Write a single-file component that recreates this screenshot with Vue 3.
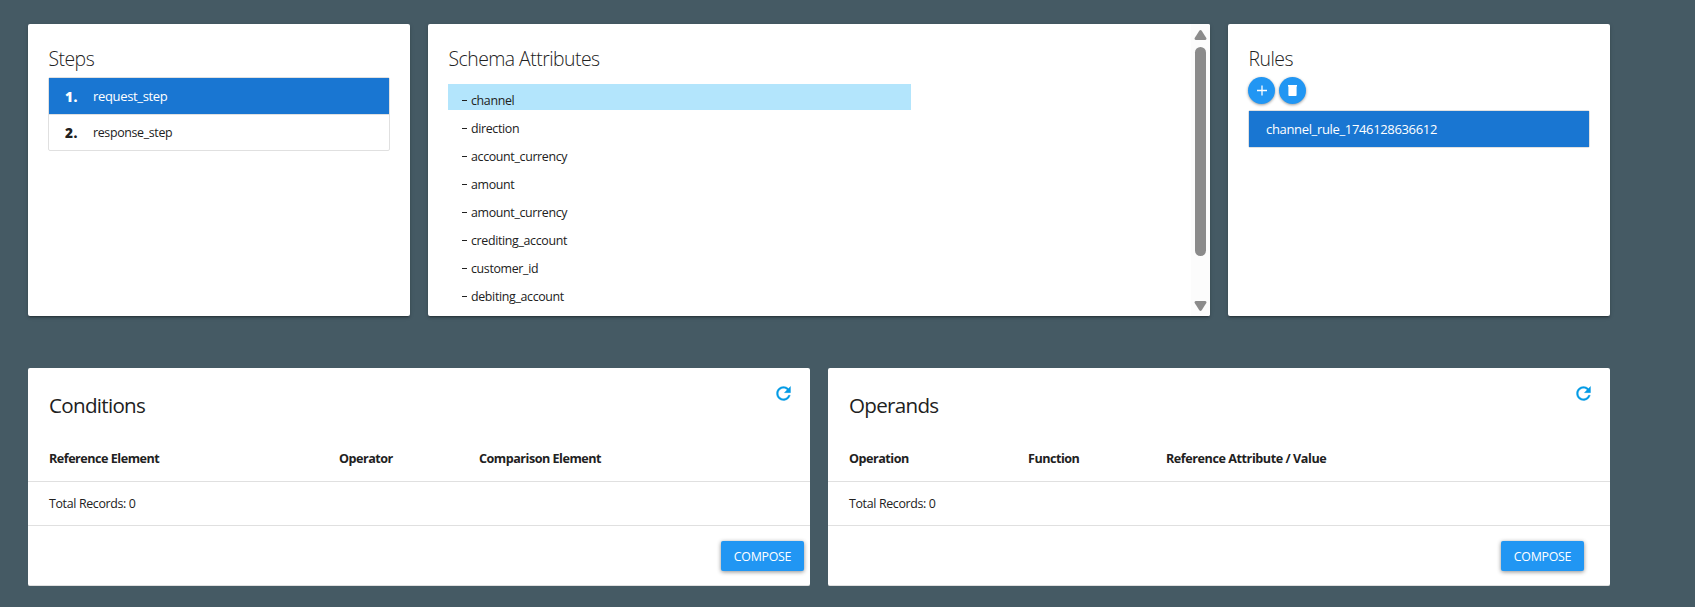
<script setup>
const steps = [
  { no: '1.', name: 'request_step', active: true },
  { no: '2.', name: 'response_step', active: false },
]
const attributes = [
  'channel',
  'direction',
  'account_currency',
  'amount',
  'amount_currency',
  'crediting_account',
  'customer_id',
  'debiting_account',
]
const tables = [
  {
    key: 'conditions',
    title: 'Conditions',
    columns: ['Reference Element', 'Operator', 'Comparison Element'],
  },
  {
    key: 'operands',
    title: 'Operands',
    columns: ['Operation', 'Function', 'Reference Attribute / Value'],
  },
]
</script>

<template>
  <main class="page">
    <div class="top">
      <section class="card pad">
        <h2 class="heading">Steps</h2>
        <ul class="list">
          <li v-for="s in steps" :key="s.no" class="item" :class="{ active: s.active }">
            <span class="no">{{ s.no }}</span>
            <span>{{ s.name }}</span>
          </li>
        </ul>
      </section>

      <section class="card schema">
        <div class="pad grow">
          <h2 class="heading">Schema Attributes</h2>
          <ul class="attributes">
            <li v-for="(a, i) in attributes" :key="a" class="attribute" :class="{ selected: i === 0 }">
              <i class="dash"></i>
              <span>{{ a }}</span>
            </li>
          </ul>
        </div>
        <div class="scrollbar">
          <svg width="13" height="10" viewBox="0 0 13 10"><path d="M5.3 .8Q6.5-.6 7.7.8L12.3 8Q12.9 9.7 11.3 10H1.7Q.1 9.7.7 8Z" fill="#8b8b8b" /></svg>
          <div class="thumb"></div>
          <svg class="down" width="13" height="10" viewBox="0 0 13 10"><path d="M5.3 9.2Q6.5 10.6 7.7 9.2L12.3 2Q12.9.3 11.3 0H1.7Q.1.3.7 2Z" fill="#8b8b8b" /></svg>
        </div>
      </section>

      <section class="card pad">
        <h2 class="heading">Rules</h2>
        <div class="actions">
          <button class="round" aria-label="Add">
            <svg width="27" height="27" viewBox="0 0 27 27"><path d="M9 13.5H19M14 8.5V18.5" stroke="#fff" stroke-width="1.3" fill="none" /></svg>
          </button>
          <button class="round" aria-label="Delete">
            <svg width="27" height="27" viewBox="0 0 27 27"><path d="M9 8H18V9.4H17.6V18.2Q17.6 19 16.8 19H10.2Q9.4 19 9.4 18.2V9.4H9Z" fill="#fff" /></svg>
          </button>
        </div>
        <ul class="list rules">
          <li class="item active"><span>channel_rule_1746128636612</span></li>
        </ul>
      </section>
    </div>

    <div class="bottom">
      <section v-for="t in tables" :key="t.key" class="card panel" :class="t.key">
        <header class="panel-head">
          <h2 class="title">{{ t.title }}</h2>
          <svg class="refresh" width="21" height="21" viewBox="0 0 24 24">
            <path d="M17.65 6.35C16.2 4.9 14.21 4 12 4c-4.42 0-7.99 3.58-7.99 8s3.57 8 7.99 8c3.73 0 6.84-2.55 7.73-6h-2.08c-.82 2.33-3.04 4-5.65 4-3.31 0-6-2.69-6-6s2.69-6 6-6c1.66 0 3.14.69 4.22 1.78L13 11h7V4l-2.35 2.35z" fill="#039be5" stroke="#039be5" stroke-width=".4" />
          </svg>
        </header>
        <div class="columns">
          <span v-for="c in t.columns" :key="c">{{ c }}</span>
        </div>
        <div class="total">Total Records: 0</div>
        <footer class="foot"><button class="compose">COMPOSE</button></footer>
      </section>
    </div>
  </main>
</template>

<style>
body {
  margin: 0;
  background: #455a64;
}
</style>

<style scoped>
.page {
  box-sizing: border-box;
  width: 1695px;
  height: 607px;
  padding: 24px 85px 0 28px;
  overflow: hidden;
  background: #455a64;
  color: #212121;
  font: 12.4px 'Open Sans', 'Noto Sans', sans-serif;
  letter-spacing: -0.34px;
}
h2,
ul {
  margin: 0;
  padding: 0;
  list-style: none;
}
button {
  border: 0;
  padding: 0;
  font: inherit;
  letter-spacing: -0.28px;
  color: #fff;
  background: #2196f3;
}
svg {
  display: block;
}
.top {
  display: grid;
  grid-template-columns: 382px 782px 382px;
  gap: 18px;
  height: 292px;
}
.bottom {
  display: grid;
  grid-template-columns: 782px 782px;
  gap: 18px;
  margin-top: 52px;
  height: 218px;
}
.card {
  box-sizing: border-box;
  background: #fff;
  border-radius: 2px;
  overflow: hidden;
  box-shadow: 0 2px 2px rgba(0, 0, 0, 0.14), 0 1px 5px rgba(0, 0, 0, 0.12), 0 3px 1px -2px rgba(0, 0, 0, 0.2);
}
.panel {
  border-bottom: 1px solid #e0e0e0;
  box-shadow: none;
}
.pad {
  padding: 20px 20px 0;
}
.heading {
  height: 33px;
  padding-left: 0.5px;
  line-height: 29px;
  font-size: 19.4px;
  font-weight: 300;
  letter-spacing: -0.53px;
}
.list {
  border: 1px solid #e0e0e0;
  border-radius: 2px;
}
.item {
  display: flex;
  align-items: center;
  box-sizing: border-box;
  height: 35px;
  padding: 0 17px;
}
.item.active {
  height: 36px;
  background: #1976d2;
  color: #fff;
  font-size: 13px;
  font-weight: 500;
}
.item + .item {
  height: 36px;
  border-top: 1px solid #e0e0e0;
}
.no {
  width: 27px;
  margin: 0 1px 0 -1px;
  font-size: 13.6px;
  font-weight: 800;
  letter-spacing: 0.5px;
}
.schema {
  display: flex;
}
.grow {
  flex: 1;
}
.attributes {
  margin-top: 7px;
}
.attribute {
  display: flex;
  align-items: center;
  box-sizing: border-box;
  width: 463px;
  height: 26px;
  margin-bottom: 2px;
  padding: 6px 0 0 13px;
}
.attribute.selected {
  background: #b3e5fc;
}
.dash {
  width: 5px;
  height: 1px;
  margin: 1px 4px 0 1px;
  background: #212121;
}
.scrollbar {
  display: flex;
  flex-direction: column;
  align-items: center;
  box-sizing: border-box;
  width: 19px;
  padding: 6px 0 5px;
  background: #fcfcfc;
}
.thumb {
  width: 11px;
  height: 209px;
  margin-top: 7px;
  border-radius: 6px;
  background: #8b8b8b;
}
.down {
  margin-top: auto;
}
.actions {
  display: flex;
  gap: 4px;
}
.round {
  width: 27px;
  height: 27px;
  border-radius: 50%;
  box-shadow: 0 1px 3px rgba(0, 0, 0, 0.4);
}
.rules {
  margin-top: 6px;
}
.panel-head {
  display: flex;
  justify-content: space-between;
  height: 67px;
  padding: 0 16px 0 21px;
}
.title {
  margin-top: 22px;
  font-size: 20.6px;
  line-height: 30px;
  font-weight: 400;
  letter-spacing: -0.7px;
}
.refresh {
  margin-top: 15px;
}
.columns {
  display: grid;
  align-items: center;
  height: 46px;
  padding-left: 21px;
  border-bottom: 1px solid #e0e0e0;
  font-size: 12.6px;
  font-weight: 700;
  letter-spacing: -0.49px;
}
.conditions .columns {
  grid-template-columns: 290px 140px 1fr;
}
.operands .columns {
  grid-template-columns: 179px 138px 1fr;
}
.operands .columns span:last-child {
  letter-spacing: -0.44px;
}
.total {
  height: 43px;
  padding-left: 21px;
  line-height: 43px;
  border-bottom: 1px solid #e0e0e0;
}
.foot {
  display: flex;
  justify-content: flex-end;
  padding: 15px 6px 0;
}
.operands .foot {
  padding-right: 26px;
}
.compose {
  width: 83px;
  height: 30px;
  border-radius: 2px;
  box-shadow: 0 1px 4px rgba(0, 0, 0, 0.45);
}
</style>
